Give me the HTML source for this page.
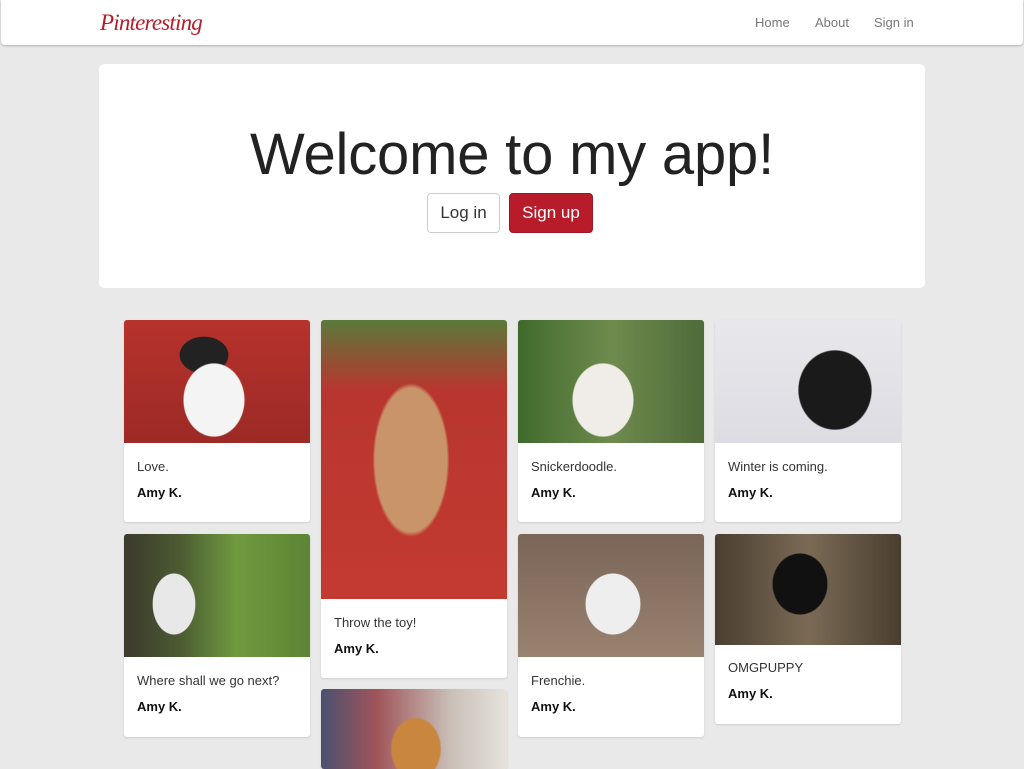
<!DOCTYPE html>
<html><head><meta charset="utf-8"><style>
*{box-sizing:border-box;margin:0;padding:0}
body{width:1024px;height:748px;overflow:hidden;background:#e9e9e9;font-family:"Liberation Sans",Arial,sans-serif;position:relative}
.nav{position:absolute;left:1px;top:0;width:1022px;height:45px;background:#fff;border-radius:0 0 4px 4px;box-shadow:0 1px 2px rgba(0,0,0,.25)}
.logo{position:absolute;left:99px;top:10px;font-family:"Liberation Serif",serif;font-style:italic;color:#b81c2b;font-size:23px;letter-spacing:-0.8px}
.links a{position:absolute;top:15px;font-size:13px;color:#777;text-decoration:none}
.jumbo{position:absolute;left:99px;top:64px;width:826px;height:224px;background:#fff;border-radius:5px}
h1{position:absolute;left:0;right:0;top:121px;text-align:center;font-size:58px;font-weight:normal;color:#222;letter-spacing:-0.2px}
.btn{position:absolute;top:193px;height:40px;border-radius:4px;font-size:17px;line-height:38px;text-align:center}
.card{position:absolute;width:186px;background:#fff;border-radius:3px;box-shadow:0 1px 2px rgba(0,0,0,.12);overflow:hidden}
.img{width:186px}
.cap{position:absolute;left:13px;font-size:13px;color:#333}
.au{position:absolute;left:13px;font-size:13px;color:#111;font-weight:bold}
</style></head><body>
<div class="nav"><div class="logo">Pinteresting</div>
<div class="links"><a style="left:754px">Home</a><a style="left:814px">About</a><a style="left:873px">Sign in</a></div></div>
<div class="jumbo"></div>
<h1>Welcome to my app!</h1>
<div class="btn" style="left:427px;width:73px;border:1px solid #ccc;background:#fff;color:#333">Log in</div>
<div class="btn" style="left:509px;width:84px;background:#b81c2b;border:1px solid #a01525;color:#fff">Sign up</div>

<div class="card" style="left:124px;top:320px;height:202px"><div class="img" style="height:123px;background:radial-gradient(ellipse 50px 60px at 90px 80px,#f4f4f4 60%,transparent 62%),radial-gradient(ellipse 40px 30px at 80px 35px,#222 60%,transparent 62%),linear-gradient(#b7322c,#9c2a26)"></div><div class="cap" style="top:139px">Love.</div><div class="au" style="top:165px">Amy K.</div></div>
<div class="card" style="left:124px;top:534px;height:203px"><div class="img" style="height:123px;background:radial-gradient(ellipse 35px 50px at 50px 70px,#e8e8e8 60%,transparent 62%),linear-gradient(90deg,#3b3a2c 0,#4b5b32 30%,#6f9a3f 60%,#5c8434)"></div><div class="cap" style="top:139px">Where shall we go next?</div><div class="au" style="top:165px">Amy K.</div></div>

<div class="card" style="left:321px;top:320px;height:358px"><div class="img" style="height:279px;background:radial-gradient(ellipse 60px 120px at 90px 140px,#c9946a 60%,transparent 64%),linear-gradient(#5a7a3a 0,#b8362f 25%,#c33a31)"></div><div class="cap" style="top:295px">Throw the toy!</div><div class="au" style="top:321px">Amy K.</div></div>
<div class="card" style="left:321px;top:689px;height:80px"><div class="img" style="height:80px;background:radial-gradient(ellipse 40px 50px at 95px 60px,#c9863f 60%,transparent 64%),linear-gradient(90deg,#4a5070,#a0555a 30%,#c9c0b8 70%,#e6e2dc)"></div></div>

<div class="card" style="left:518px;top:320px;height:202px"><div class="img" style="height:123px;background:radial-gradient(ellipse 50px 60px at 85px 80px,#f0ece8 60%,transparent 62%),linear-gradient(90deg,#3f6a2c,#6f8b4e 50%,#4f6b3a)"></div><div class="cap" style="top:139px">Snickerdoodle.</div><div class="au" style="top:165px">Amy K.</div></div>
<div class="card" style="left:518px;top:534px;height:203px"><div class="img" style="height:123px;background:radial-gradient(ellipse 45px 50px at 95px 70px,#eeeeee 60%,transparent 62%),linear-gradient(#7a6558,#9a8270)"></div><div class="cap" style="top:139px">Frenchie.</div><div class="au" style="top:165px">Amy K.</div></div>

<div class="card" style="left:715px;top:320px;height:202px"><div class="img" style="height:123px;background:radial-gradient(ellipse 60px 65px at 120px 70px,#1a1a1a 60%,transparent 62%),linear-gradient(#e8e8ec,#dcdce2)"></div><div class="cap" style="top:139px">Winter is coming.</div><div class="au" style="top:165px">Amy K.</div></div>
<div class="card" style="left:715px;top:534px;height:190px"><div class="img" style="height:111px;background:radial-gradient(ellipse 45px 50px at 85px 50px,#111 60%,transparent 62%),linear-gradient(90deg,#4a3e30,#7a6a55 50%,#4a3e30)"></div><div class="cap" style="top:126px">OMGPUPPY</div><div class="au" style="top:152px">Amy K.</div></div>
</body></html>
